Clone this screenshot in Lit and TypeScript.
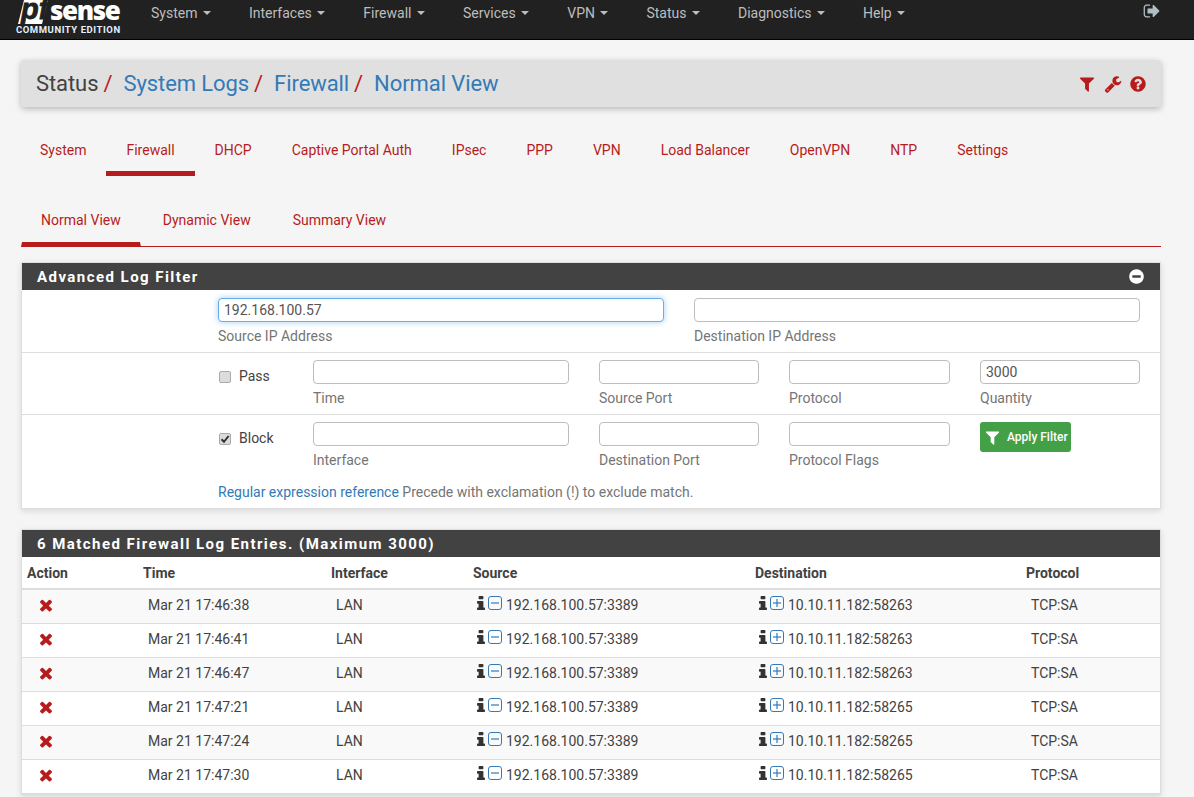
import {LitElement, html, css, svg} from "lit"
import {customElement} from "lit/decorators.js"

const FILTER = "M1595 295q17 41-14 70l-493 493v742q0 42-39 59-13 5-25 5-27 0-45-19l-256-256q-19-19-19-45v-486l-493-493q-31-29-14-70 17-39 59-39h1280q42 0 59 39z"
const WRENCH = "M448 1472q0-26-19-45t-45-19-45 19-19 45 19 45 45 19 45-19 19-45zm644-420l-682 682q-37 37-90 37-52 0-91-37l-106-108q-38-36-38-90 0-53 38-91l681-681q39 98 114.5 173.5t173.5 114.5zm634-435q0 39-23 106-47 134-164.5 217.5t-258.5 83.5q-185 0-316.5-131.5t-131.5-316.5 131.5-316.5 316.5-131.5q58 0 121.5 16.5t107.5 46.5q16 11 16 28t-16 28l-293 169v224l193 107q5-3 79-48.5t135.5-81 70.5-35.5q15 0 23.5 10t8.5 25z"
const QUESTION = "M1024 1376v-192q0-14-9-23t-23-9h-192q-14 0-23 9t-9 23v192q0 14 9 23t23 9h192q14 0 23-9t9-23zm256-672q0-88-55.5-163t-138.5-116-170-41q-243 0-371 213-15 24 8 42l132 100q7 6 19 6 16 0 25-12 53-68 86-92 34-24 86-24 48 0 85.5 26t37.5 59q0 38-20 61t-68 45q-63 28-115.5 86.5t-52.5 125.5v36q0 14 9 23t23 9h192q14 0 23-9t9-23q0-19 21.5-49.5t54.5-49.5q32-18 49-28.5t46-35 44.5-48 28-60.5 12.5-81zm384 192q0 209-103 385.5t-279.5 279.5-385.5 103-385.5-103-279.5-279.5-103-385.5 103-385.5 279.5-279.5 385.5-103 385.5 103 279.5 279.5 103 385.5z"
const SIGNOUT = "M704 1440q0 4 1 20t.5 26.5-3 23.5-10 19.5-20.5 6.5h-320q-119 0-203.5-84.5t-84.5-203.5v-704q0-119 84.5-203.5t203.5-84.5h320q13 0 22.5 9.5t9.5 22.5q0 4 1 20t.5 26.5-3 23.5-10 19.5-20.5 6.5h-320q-66 0-113 47t-47 113v704q0 66 47 113t113 47h312l11.5 1 11.5 3 8 5.5 7 9 2 13.5zm928-544q0 26-19 45l-544 544q-19 19-45 19t-45-19-19-45v-288h-448q-26 0-45-19t-19-45v-384q0-26 19-45t45-19h448v-288q0-26 19-45t45-19 45 19l544 544q19 19 19 45z"
const TIMES = "M1490 1322q0 40-28 68l-136 136q-28 28-68 28t-68-28l-294-294-294 294q-28 28-68 28t-68-28l-136-136q-28-28-28-68t28-68l294-294-294-294q-28-28-28-68t28-68l136-136q28-28 68-28t68 28l294 294 294-294q28-28 68-28t68 28l136 136q28 28 28 68t-28 68l-294 294 294 294q28 28 28 68z"
const MINUS_CIRCLE = "M1344 960v-128q0-26-19-45t-45-19h-768q-26 0-45 19t-19 45v128q0 26 19 45t45 19h768q26 0 45-19t19-45zm320-64q0 209-103 385.5t-279.5 279.5-385.5 103-385.5-103-279.5-279.5-103-385.5 103-385.5 279.5-279.5 385.5-103 385.5 103 279.5 279.5 103 385.5z"
const INFO = "M1216 1344v128q0 26-19 45t-45 19h-512q-26 0-45-19t-19-45v-128q0-26 19-45t45-19h64v-384h-64q-26 0-45-19t-19-45v-128q0-26 19-45t45-19h384q26 0 45 19t19 45v576h64q26 0 45 19t19 45zm-128-1152v192q0 26-19 45t-45 19h-256q-26 0-45-19t-19-45v-192q0-26 19-45t45-19h256q26 0 45 19t19 45z"

const icon = (d: string, cls: string) => html`<svg class=${cls} viewBox="0 0 1792 1792"><path fill="currentColor" d=${d}></path></svg>`

// the reference glyph is wider than fa-info, so the box is cropped and stretched
const infoIcon = () => html`<svg class="i" viewBox="576 128 640 1408" preserveAspectRatio="none"><path fill="currentColor" d=${INFO}></path></svg>`

const squareIcon = (plus: boolean) => html`
    <svg class="sq" viewBox="0 0 14 14">
        <rect x="0.5" y="0.5" width="13" height="13" rx="2.5" fill="none" stroke="currentColor"></rect>
        ${svg`<path d="M3 7h8" stroke="currentColor" stroke-width="1.2"></path>`}
        ${plus ? svg`<path d="M7 3v8" stroke="currentColor" stroke-width="1.2"></path>` : ""}
    </svg>`

const NAV = ["System", "Interfaces", "Firewall", "Services", "VPN", "Status", "Diagnostics", "Help"]
const TABS = ["System", "Firewall", "DHCP", "Captive Portal Auth", "IPsec", "PPP", "VPN", "Load Balancer", "OpenVPN", "NTP", "Settings"]
const SUBTABS = ["Normal View", "Dynamic View", "Summary View"]
const LOGS = [
    ["Mar 21 17:46:38", "10.10.11.182:58263"],
    ["Mar 21 17:46:41", "10.10.11.182:58263"],
    ["Mar 21 17:46:47", "10.10.11.182:58263"],
    ["Mar 21 17:47:21", "10.10.11.182:58265"],
    ["Mar 21 17:47:24", "10.10.11.182:58265"],
    ["Mar 21 17:47:30", "10.10.11.182:58265"],
]

@customElement("app-root")
export class AppRoot extends LitElement {
    static styles = css`
        :host {
            display: block;
            height: 797px;
            overflow: hidden;
            background: #f5f5f5;
            color: #424242;
            font-family: Roboto, "Liberation Sans", sans-serif;
            font-size: 14px;
            line-height: 20px;
        }
        a { color: #337ab7; text-decoration: none; }

        .navbar {
            display: flex;
            align-items: flex-start;
            box-sizing: content-box;
            height: 39px;
            background: #212121;
            border-bottom: 1px solid #000;
            color: #bdbdbd;
        }
        .logo {
            position: relative;
            flex: none;
            width: 106px;
            height: 39px;
            margin: 0 29px 0 16px;
            color: #fff;
        }
        .logo-pf {
            position: absolute;
            left: 5px;
            top: 0;
            width: 24px;
            height: 24px;
            background: #fff;
            transform: skewX(-14deg);
        }
        .logo-pf-text {
            position: absolute;
            left: 5px;
            top: 0;
            color: #212121;
            font: italic 700 29px/18px "Liberation Sans", sans-serif;
            -webkit-text-stroke: 0.8px #212121;
        }
        .logo-sense {
            position: absolute;
            left: 34px;
            top: 0;
            font: 800 26px/20px "Open Sans", sans-serif;
            letter-spacing: -1.4px;
        }
        .logo-edition {
            position: absolute;
            left: 0;
            top: 23px;
            color: #e3f2fd;
            font: 700 9.5px/13px Roboto, sans-serif;
            letter-spacing: 0.55px;
            white-space: nowrap;
        }
        .menu { display: flex; gap: 38px; padding-top: 3px; }
        .menu-item { display: flex; align-items: center; gap: 5.5px; }
        .caret {
            width: 0;
            height: 0;
            border-top: 4px solid currentColor;
            border-left: 4px solid transparent;
            border-right: 4px solid transparent;
        }
        .signout { width: 18px; height: 18px; margin: 2px 33px 0 auto; color: #b0bec5; }

        .content { width: 1140px; margin-left: 21px; }

        .crumbs {
            display: flex;
            align-items: center;
            height: 47px;
            margin-top: 20px;
            padding: 0 14px 0 15px;
            background: #e0e0e0;
            border-radius: 3px;
            box-shadow: 0 2px 6px rgba(0, 0, 0, 0.25);
            font-size: 22px;
            line-height: 30px;
            letter-spacing: -0.08px;
            box-sizing: border-box;
        }
        .sep { margin: 0 11px 0 5px; color: #b71c1c; }
        .crumb-icons { display: flex; gap: 7.5px; margin-left: auto; color: #b71c1c; }
        .crumb-icon { width: 18px; height: 18px; }

        .tabs { display: flex; margin-top: 19px; margin-left: -1px; }
        .tab {
            padding: 0 20px;
            height: 45px;
            line-height: 49px;
            border-bottom: 5px solid transparent;
            color: #b71c1c;
            white-space: nowrap;
        }
        .tab.active { border-bottom-color: #b71c1c; }

        .subtabs {
            display: flex;
            gap: 2px;
            margin-top: 20px;
            height: 50px;
            border-bottom: 1px solid #b71c1c;
        }
        .subtab {
            padding: 0 19px;
            height: 46px;
            line-height: 48px;
            color: #b71c1c;
            border: 1px solid transparent;
            border-width: 0 1px 5px;
            white-space: nowrap;
        }
        .subtab.active { border-bottom-color: #b71c1c; }

        .panel {
            background: #fff;
            border: 1px solid #ddd;
            border-top-color: #e0e0e0;
            box-shadow: 0 2px 6px rgba(0, 0, 0, 0.12);
        }
        .filter { margin-top: 15px; }
        .table-panel { margin-top: 20px; }
        .heading {
            display: flex;
            align-items: center;
            justify-content: space-between;
            height: 27px;
            padding: 0 15px;
            background: #424242;
            color: #fff;
            font-size: 15px;
            font-weight: 700;
            letter-spacing: 1.45px;
        }
        .collapse { width: 17px; height: 17px; color: #fff; }

        .row {
            display: grid;
            padding: 7px 20px 6px 196px;
            column-gap: 30px;
            border-bottom: 1px solid #ddd;
        }
        .row:last-child { border-bottom: 0; }
        .row-two { grid-template-columns: 446px 446px; padding-top: 8px; }
        .row-five { grid-template-columns: 65px 256px 160px 161px 160px; }
        .field { display: flex; flex-direction: column; gap: 4px; min-width: 0; }
        .field label { color: #757575; height: 20px; }
        input {
            box-sizing: border-box;
            width: 100%;
            height: 24px;
            margin: 0;
            padding: 0 5px;
            background: #fff;
            border: 1px solid #bdbdbd;
            border-radius: 4px;
            color: #555;
            font: 14px Roboto, "Liberation Sans", sans-serif;
            outline: none;
        }
        input.focused {
            border-color: #66afe9;
            box-shadow: 0 0 6px rgba(102, 175, 233, 0.6);
        }
        .check { display: flex; align-items: center; gap: 8px; height: 24px; margin-top: 4px; margin-left: 1px; }
        .box {
            box-sizing: border-box;
            display: flex;
            align-items: center;
            justify-content: center;
            flex: none;
            width: 12px;
            height: 12px;
            margin-top: 1px;
            background: #dcdcdc;
            border: 1px solid #aaa;
            border-radius: 2px;
            color: #333;
        }
        .box svg { width: 10px; height: 10px; }
        .apply {
            display: flex;
            align-items: center;
            gap: 6px;
            box-sizing: border-box;
            width: 91px;
            height: 30px;
            padding: 0 0 0 4px;
            background: #43a047;
            border: 0;
            border-radius: 3px;
            color: #fff;
            font: 500 12px Roboto, sans-serif;
            white-space: nowrap;
        }
        .apply svg { width: 17px; height: 17px; flex: none; }
        .help { grid-column: 1 / -1; margin-top: 12px; color: #757575; }

        table { width: 100%; border-collapse: collapse; table-layout: fixed; }
        th {
            height: 31px;
            padding: 0 5px;
            text-align: left;
            font-weight: 700;
            border-bottom: 2px solid #ddd;
        }
        td {
            height: 29px;
            padding: 0 5px 4px 10px;
            border-bottom: 1px solid #ddd;
        }
        tbody tr:nth-child(odd) { background: #f9f9f9; }
        .x { display: block; width: 18px; height: 18px; margin-left: 5px; color: #b71c1c; }
        .addr { display: flex; align-items: center; white-space: nowrap; }
        .addr-icons { display: flex; align-items: center; gap: 3px; margin: -3px 4px 0 -1px; }
        .i { width: 8px; height: 14px; color: #333; }
        .sq { width: 14px; height: 14px; color: #337ab7; }
    `

    renderField(label: string, value = "", focused = false) {
        return html`<div class="field">
            <input class=${focused ? "focused" : ""} .value=${value} />
            <label>${label}</label>
        </div>`
    }

    renderCheck(label: string, checked: boolean) {
        return html`<div class="check">
            <span class="box">
                ${checked ? html`<svg viewBox="0 0 10 10"><path d="M1.5 5.2 4 7.8 8.6 2" fill="none" stroke="currentColor" stroke-width="2"></path></svg>` : ""}
            </span>
            <span>${label}</span>
        </div>`
    }

    render() {
        return html`
            <nav class="navbar">
                <div class="logo">
                    <div class="logo-pf"></div>
                    <span class="logo-pf-text">pf</span>
                    <span class="logo-sense">sense</span>
                    <span class="logo-edition">COMMUNITY EDITION</span>
                </div>
                <div class="menu">
                    ${NAV.map(n => html`<div class="menu-item">${n}<span class="caret"></span></div>`)}
                </div>
                ${icon(SIGNOUT, "signout")}
            </nav>

            <div class="content">
                <div class="crumbs">
                    <span>Status</span><span class="sep">/</span>
                    <a>System Logs</a><span class="sep">/</span>
                    <a>Firewall</a><span class="sep">/</span>
                    <a>Normal View</a>
                    <div class="crumb-icons">
                        ${icon(FILTER, "crumb-icon")}
                        ${icon(WRENCH, "crumb-icon")}
                        ${icon(QUESTION, "crumb-icon")}
                    </div>
                </div>

                <div class="tabs">
                    ${TABS.map(t => html`<div class="tab ${t === "Firewall" ? "active" : ""}">${t}</div>`)}
                </div>
                <div class="subtabs">
                    ${SUBTABS.map(t => html`<div class="subtab ${t === "Normal View" ? "active" : ""}">${t}</div>`)}
                </div>

                <section class="panel filter">
                    <div class="heading">
                        <span>Advanced Log Filter</span>
                        ${icon(MINUS_CIRCLE, "collapse")}
                    </div>
                    <div class="row row-two">
                        ${this.renderField("Source IP Address", "192.168.100.57", true)}
                        ${this.renderField("Destination IP Address")}
                    </div>
                    <div class="row row-five">
                        ${this.renderCheck("Pass", false)}
                        ${this.renderField("Time")}
                        ${this.renderField("Source Port")}
                        ${this.renderField("Protocol")}
                        ${this.renderField("Quantity", "3000")}
                    </div>
                    <div class="row row-five">
                        ${this.renderCheck("Block", true)}
                        ${this.renderField("Interface")}
                        ${this.renderField("Destination Port")}
                        ${this.renderField("Protocol Flags")}
                        <div>
                            <button class="apply">${icon(FILTER, "")}Apply Filter</button>
                        </div>
                        <div class="help"><a>Regular expression reference</a> Precede with exclamation (!) to exclude match.</div>
                    </div>
                </section>

                <section class="panel table-panel">
                    <div class="heading"><span>6 Matched Firewall Log Entries. (Maximum 3000)</span></div>
                    <table>
                        <colgroup>
                            <col style="width:116px" />
                            <col style="width:188px" />
                            <col style="width:142px" />
                            <col style="width:282px" />
                            <col style="width:271px" />
                            <col />
                        </colgroup>
                        <thead>
                            <tr><th>Action</th><th>Time</th><th>Interface</th><th>Source</th><th>Destination</th><th>Protocol</th></tr>
                        </thead>
                        <tbody>
                            ${LOGS.map(([time, dest]) => html`
                                <tr>
                                    <td>${icon(TIMES, "x")}</td>
                                    <td>${time}</td>
                                    <td>LAN</td>
                                    <td><div class="addr"><span class="addr-icons">${infoIcon()}${squareIcon(false)}</span>192.168.100.57:3389</div></td>
                                    <td><div class="addr"><span class="addr-icons">${infoIcon()}${squareIcon(true)}</span>${dest}</div></td>
                                    <td>TCP:SA</td>
                                </tr>
                            `)}
                        </tbody>
                    </table>
                </section>
            </div>
        `
    }
}
